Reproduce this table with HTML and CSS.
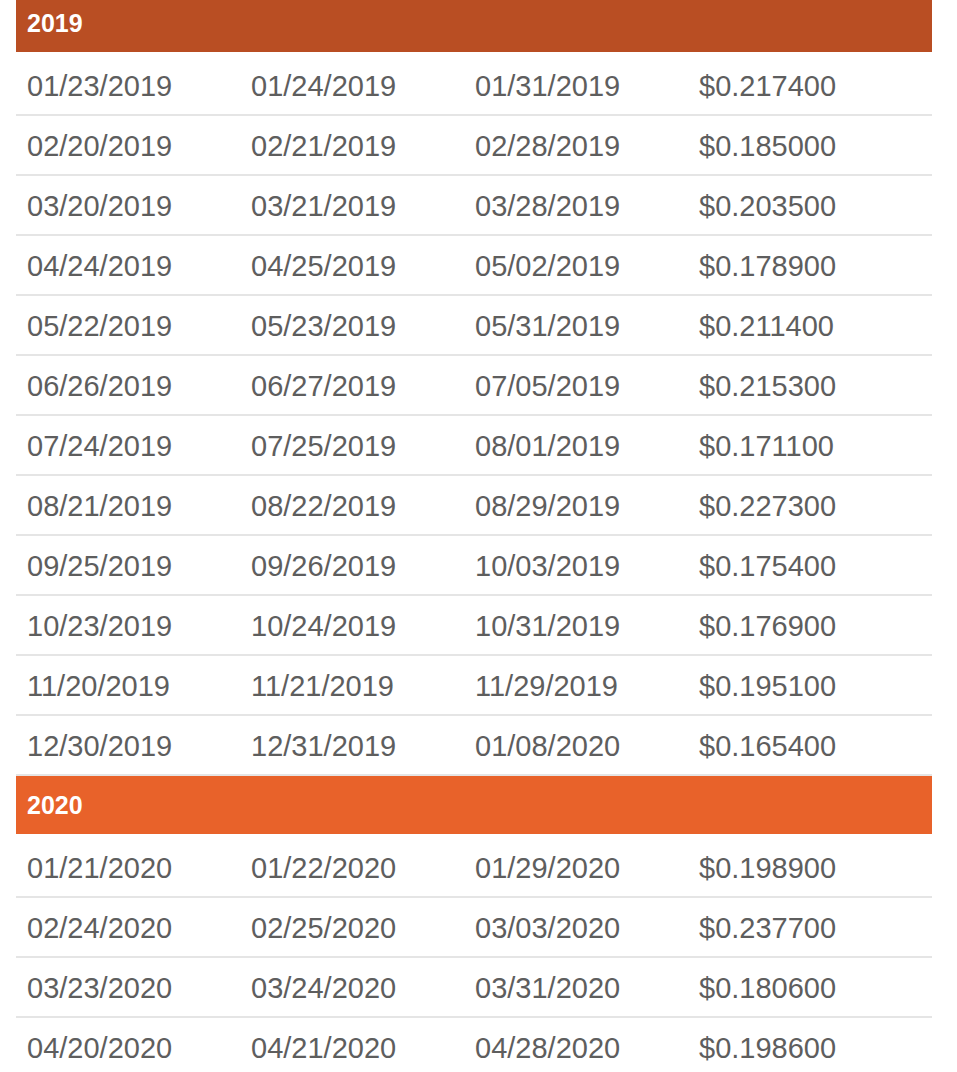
FILE: index.html
```html
<!DOCTYPE html>
<html>
<head>
<meta charset="utf-8">
<link rel="stylesheet" href="styles.css">
</head>
<body>
<div class="table">
  <section class="year">
    <div class="year-head head-2019">2019</div>
    <div class="rows">
      <div class="row"><span>01/23/2019</span><span>01/24/2019</span><span>01/31/2019</span><span>$0.217400</span></div>
      <div class="row"><span>02/20/2019</span><span>02/21/2019</span><span>02/28/2019</span><span>$0.185000</span></div>
      <div class="row"><span>03/20/2019</span><span>03/21/2019</span><span>03/28/2019</span><span>$0.203500</span></div>
      <div class="row"><span>04/24/2019</span><span>04/25/2019</span><span>05/02/2019</span><span>$0.178900</span></div>
      <div class="row"><span>05/22/2019</span><span>05/23/2019</span><span>05/31/2019</span><span>$0.211400</span></div>
      <div class="row"><span>06/26/2019</span><span>06/27/2019</span><span>07/05/2019</span><span>$0.215300</span></div>
      <div class="row"><span>07/24/2019</span><span>07/25/2019</span><span>08/01/2019</span><span>$0.171100</span></div>
      <div class="row"><span>08/21/2019</span><span>08/22/2019</span><span>08/29/2019</span><span>$0.227300</span></div>
      <div class="row"><span>09/25/2019</span><span>09/26/2019</span><span>10/03/2019</span><span>$0.175400</span></div>
      <div class="row"><span>10/23/2019</span><span>10/24/2019</span><span>10/31/2019</span><span>$0.176900</span></div>
      <div class="row"><span>11/20/2019</span><span>11/21/2019</span><span>11/29/2019</span><span>$0.195100</span></div>
      <div class="row"><span>12/30/2019</span><span>12/31/2019</span><span>01/08/2020</span><span>$0.165400</span></div>
    </div>
  </section>
  <section class="year">
    <div class="year-head head-2020">2020</div>
    <div class="rows">
      <div class="row"><span>01/21/2020</span><span>01/22/2020</span><span>01/29/2020</span><span>$0.198900</span></div>
      <div class="row"><span>02/24/2020</span><span>02/25/2020</span><span>03/03/2020</span><span>$0.237700</span></div>
      <div class="row"><span>03/23/2020</span><span>03/24/2020</span><span>03/31/2020</span><span>$0.180600</span></div>
      <div class="row"><span>04/20/2020</span><span>04/21/2020</span><span>04/28/2020</span><span>$0.198600</span></div>
    </div>
  </section>
</div>
</body>
</html>
```

FILE: styles.css
```css
html, body {
  margin: 0;
  padding: 0;
  background: #ffffff;
}
body {
  padding: 0 25px 0 16px;
  margin-top: -6px;
  font-family: "Liberation Sans", Arial, sans-serif;
}
.table {
  width: 916px;
}
.year-head {
  height: 58px;
  display: flex;
  align-items: center;
  padding-left: 11px;
  padding-top: 1px;
  box-sizing: border-box;
  color: #ffffff;
  font-weight: 700;
  font-size: 25px;
}
.head-2019 { background: #b94e23; }
.head-2020 { background: #e8622a; }
.rows {
  padding-top: 4px;
}
.row {
  display: grid;
  grid-template-columns: 224px 224px 224px 1fr;
  height: 58px;
  align-items: center;
  border-bottom: 2px solid #e5e5e5;
  color: #5e5e5e;
  font-size: 29px;
}
.row span {
  padding-left: 11px;
  padding-top: 3px;
}
```
